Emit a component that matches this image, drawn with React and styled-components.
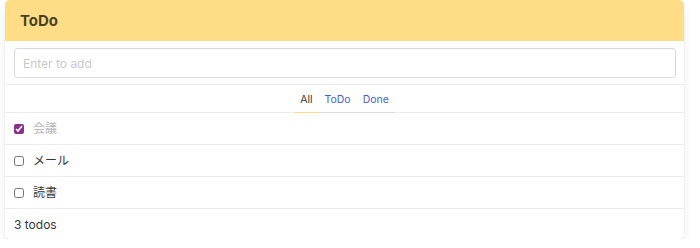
import React, { useState } from 'react';
import styled, { createGlobalStyle } from 'styled-components';

const GlobalStyle = createGlobalStyle`
  body {
    margin: 0;
    background: #fff;
    font-family: Inter, "Noto Sans CJK JP", sans-serif;
    color: #4a4a4a;
  }
`;

const Panel = styled.nav`
  margin: 0 16px 0 5px;
  border-radius: 5px;
  background: #fff;
  box-shadow: 0 6px 12px -2px rgba(10, 10, 10, 0.1), 0 0 0 1px rgba(10, 10, 10, 0.02);
  font-size: 12px;
  overflow: hidden;
`;

const Heading = styled.p`
  margin: 0;
  height: 41px;
  padding: 0 15px;
  display: flex;
  align-items: center;
  background: #ffdd87;
  color: rgba(0, 0, 0, 0.72);
  font-size: 15px;
  font-weight: 700;
`;

const Block = styled.div`
  display: flex;
  align-items: center;
  padding: ${(p) => p.$pad || '6px 9px'};
  line-height: 19px;
  border-bottom: ${(p) => (p.$last ? 'none' : '1px solid #ededed')};
  color: ${(p) => (p.$muted ? '#b5b5b5' : '#363636')};
`;

const Input = styled.input`
  flex: 1;
  height: 30px;
  box-sizing: border-box;
  padding: 0 8px;
  border: 1px solid #dbdbdb;
  border-radius: 3px;
  box-shadow: inset 0 0.5px 1px rgba(10, 10, 10, 0.05);
  font: inherit;
  font-size: 12px;
  color: #363636;
  outline: none;

  &::placeholder {
    color: rgba(54, 54, 54, 0.3);
  }
`;

const Tabs = styled.p`
  margin: 0;
  display: flex;
  justify-content: center;
  align-items: flex-end;
  border-bottom: 1px solid #ededed;
  font-size: 10.5px;
`;

const Tab = styled.a`
  padding: 7px 6px 4px;
  line-height: 16px;
  margin-bottom: -1px;
  border-bottom: 1px solid ${(p) => (p.$active ? '#ffdd87' : '#dbdbdb')};
  color: ${(p) => (p.$active ? '#363636' : '#485fc7')};
  text-decoration: none;
  cursor: pointer;
`;

const Check = styled.input`
  width: 10px;
  height: 10px;
  margin: 0 9px 0 0;
  accent-color: #8e2f8f;
`;

const items = [
  { label: '会議', done: true },
  { label: 'メール', done: false },
  { label: '読書', done: false },
];

export default function App() {
  const [todos, setTodos] = useState(items);
  const toggle = (i) =>
    setTodos(todos.map((t, j) => (j === i ? { ...t, done: !t.done } : t)));

  return (
    <>
      <GlobalStyle />
      <Panel>
        <Heading>ToDo</Heading>
        <Block $pad="7px 8px 6px 9px">
          <Input placeholder="Enter to add" />
        </Block>
        <Tabs>
          <Tab $active>All</Tab>
          <Tab>ToDo</Tab>
          <Tab>Done</Tab>
        </Tabs>
        {todos.map((t, i) => (
          <Block key={t.label} $muted={t.done}>
            <Check type="checkbox" checked={t.done} onChange={() => toggle(i)} />
            {t.label}
          </Block>
        ))}
        <Block $last $pad="6px 9px 5px">{todos.length} todos</Block>
      </Panel>
    </>
  );
}
